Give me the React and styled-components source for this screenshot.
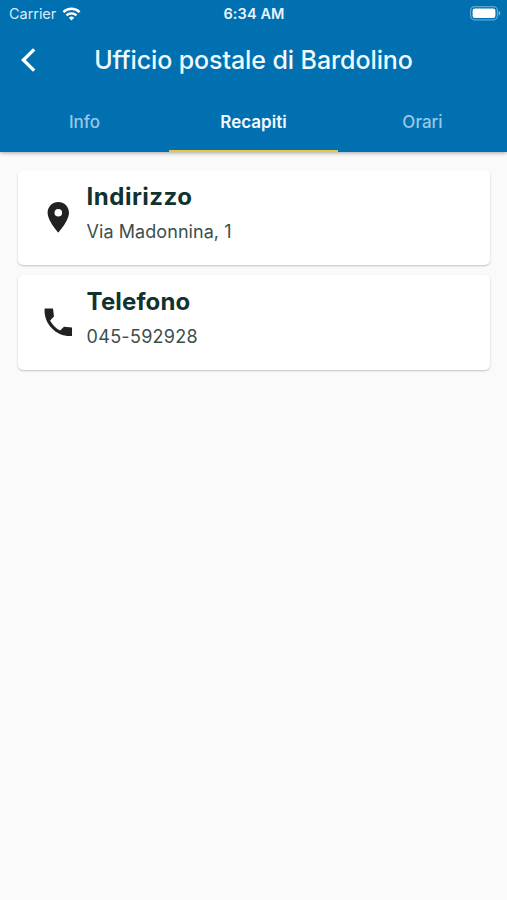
import React, { useState } from "react";
import styled, { createGlobalStyle } from "styled-components";

const tabs = ["Info", "Recapiti", "Orari"];

const contacts = [
  {
    title: "Indirizzo",
    value: "Via Madonnina, 1",
    titleSpacing: "0.5px",
    valueSpacing: "0.06px",
    icon: "M12 2C8.13 2 5 5.13 5 9c0 5.25 7 13 7 13s7-7.75 7-13c0-3.87-3.13-7-7-7zm0 9.5a2.5 2.5 0 0 1 0-5 2.5 2.5 0 0 1 0 5z",
  },
  {
    title: "Telefono",
    value: "045-592928",
    titleSpacing: "0.15px",
    valueSpacing: "0.28px",
    icon: "M21 15.46l-5.27-.61-2.52 2.52c-2.83-1.44-5.15-3.75-6.59-6.59l2.53-2.53L8.54 3H3.4q-.4 0-.4.4C2.45 13.18 10.82 21.55 20.6 21q.4 0 .4-.4v-5.14z",
  },
];

function StatusBar() {
  return (
    <Status>
      <Carrier>
        <span>Carrier</span>
        <svg width="19" height="14" viewBox="0 0 19 14" fill="none">
          <path d="M1.4 5.1a11.6 11.6 0 0 1 16.2 0" stroke="#fff" strokeWidth="2.6" />
          <path d="M4.5 8.4a7.2 7.2 0 0 1 10 0" stroke="#fff" strokeWidth="2.4" />
          <path d="M9.5 13.6L6.8 10.8a3.9 3.9 0 0 1 5.4 0z" fill="#fff" />
        </svg>
      </Carrier>
      <Clock>6:34 AM</Clock>
      <svg width="31" height="15" viewBox="0 0 31 15">
        <rect x="0.6" y="0.6" width="26.8" height="13.2" rx="4" fill="none" stroke="#fff" strokeOpacity="0.38" strokeWidth="1.2" />
        <rect x="2.6" y="2.5" width="22.8" height="9.4" rx="2.2" fill="#fff" />
        <path d="M28.7 5v4.6c1-.4 1.6-1.3 1.6-2.3s-.6-1.9-1.6-2.3z" fill="#fff" fillOpacity="0.5" />
      </svg>
    </Status>
  );
}

function ContactCard({ contact }) {
  return (
    <Card>
      <svg width="36.6" height="36.6" viewBox="0 0 24 24" fill="#212121">
        <path d={contact.icon} />
      </svg>
      <div>
        <CardTitle $spacing={contact.titleSpacing}>{contact.title}</CardTitle>
        <CardValue $spacing={contact.valueSpacing}>{contact.value}</CardValue>
      </div>
    </Card>
  );
}

function App() {
  const [active, setActive] = useState("Recapiti");

  return (
    <Screen>
      <GlobalStyle />
      <Header>
        <StatusBar />
        <TitleBar>
          <BackButton aria-label="Indietro">
            <svg width="15" height="24" viewBox="0 0 15 24" fill="none">
              <path d="M13.2 1.4L2.4 12l10.8 10.6" stroke="#fff" strokeWidth="3.4" />
            </svg>
          </BackButton>
          <Title>Ufficio postale di Bardolino</Title>
        </TitleBar>
        <Tabs>
          {tabs.map((tab) => (
            <Tab key={tab} $active={tab === active} onClick={() => setActive(tab)}>
              {tab}
            </Tab>
          ))}
        </Tabs>
      </Header>
      <List>
        {contacts.map((contact) => (
          <ContactCard key={contact.title} contact={contact} />
        ))}
      </List>
    </Screen>
  );
}

export default App;

const GlobalStyle = createGlobalStyle`
  * {
    box-sizing: border-box;
  }
  body {
    margin: 0;
    background: #fafafa;
    font-family: Inter, "Liberation Sans", sans-serif;
  }
  svg {
    display: block;
    flex-shrink: 0;
  }
`;

const Screen = styled.div`
  min-height: 900px;
  background: #fafafa;
`;

const Header = styled.header`
  height: 152px;
  background: #0070b0;
  color: #fff;
  box-shadow: 0 1px 4px rgba(0, 0, 0, 0.35);
`;

const Status = styled.div`
  display: grid;
  grid-template-columns: 1fr auto 1fr;
  align-items: center;
  height: 27px;
  padding: 0 6px 0 9px;
  > svg {
    justify-self: end;
  }
`;

const Carrier = styled.div`
  display: flex;
  align-items: center;
  gap: 5.5px;
  font-size: 14.5px;
  letter-spacing: -0.05px;
  color: #d9ecf8;
`;

const Clock = styled.div`
  margin-right: 2px;
  font-size: 14.5px;
  font-weight: 600;
  letter-spacing: 0.1px;
  color: #e9f6ff;
`;

const TitleBar = styled.div`
  display: grid;
  grid-template-columns: 74px 1fr 74px;
  align-items: center;
  height: 65px;
`;

const BackButton = styled.button`
  padding: 0 0 0 20.5px;
  border: 0;
  background: none;
`;

const Title = styled.h1`
  margin: 0;
  font-size: 25px;
  font-weight: 500;
  line-height: 30px;
  letter-spacing: -0.1px;
  text-align: center;
  white-space: nowrap;
  color: #effaff;
`;

const Tabs = styled.nav`
  display: grid;
  grid-template-columns: repeat(3, 1fr);
  height: 60px;
`;

const Tab = styled.button`
  padding: 2px 0 0;
  border: 0;
  border-bottom: 2px solid ${(props) => (props.$active ? "#e8c53a" : "transparent")};
  background: none;
  font-family: inherit;
  font-size: 17px;
  font-weight: ${(props) => (props.$active ? 600 : 500)};
  color: ${(props) => (props.$active ? "#f2fbff" : "#96c8ea")};
`;

const List = styled.main`
  display: flex;
  flex-direction: column;
  gap: 10.5px;
  padding: 18px 17px 0 18px;
`;

const Card = styled.section`
  display: flex;
  gap: 10px;
  height: 94.5px;
  padding: 10px 22px;
  border-radius: 5px;
  background: #fff;
  box-shadow: 0 1px 2px rgba(0, 0, 0, 0.23);
  > svg {
    margin: 19px 0 0 0;
  }
`;

const CardTitle = styled.h2`
  margin: 2px 0 0;
  font-size: 24px;
  font-weight: 700;
  line-height: 30px;
  letter-spacing: ${(props) => props.$spacing};
  color: #10332f;
`;

const CardValue = styled.p`
  margin: 8px 0 0;
  font-size: 18px;
  line-height: 24px;
  letter-spacing: ${(props) => props.$spacing};
  color: #3b4f4c;
`;
